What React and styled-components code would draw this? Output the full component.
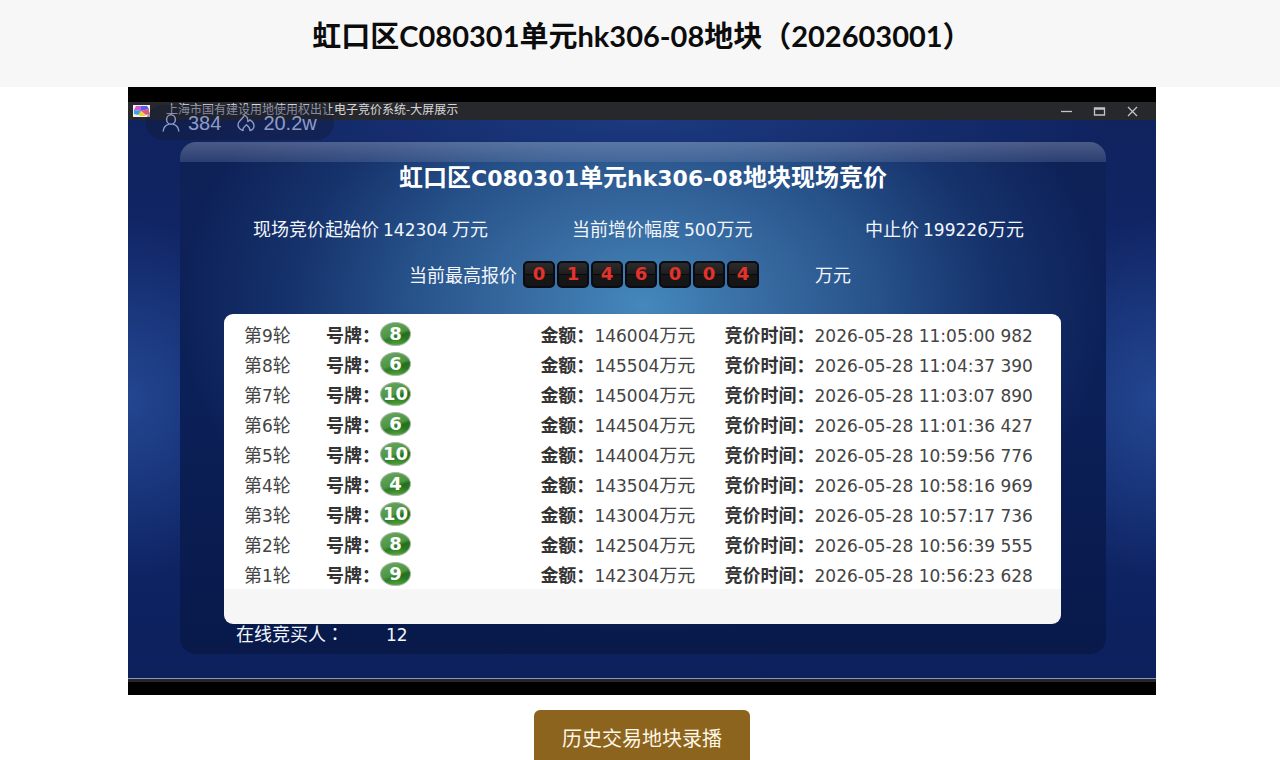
import React from "react";
import styled, { createGlobalStyle } from "styled-components";

const GlobalStyle = createGlobalStyle`
  * { box-sizing: border-box; }
  body { margin: 0; background: #ffffff; font-family: "Noto Sans CJK SC", sans-serif; }
`;

const Header = styled.header`
  height: 87px;
  padding: 16px 0 0 4px;
  background: #f7f7f7;
`;

const PageTitle = styled.h1`
  margin: 0;
  text-align: center;
  font: 700 29px/40px Lato, "Noto Sans CJK SC", sans-serif;
  color: #0c0c0c;
`;

const Main = styled.main`
  padding: 0 124px 0 128px;
`;

const Stage = styled.section`
  position: relative;
  padding: 15px 0 13px;
  background: #000000;
`;

const TitleBar = styled.div`
  display: flex;
  align-items: center;
  height: 18px;
  padding: 0 7px 0 5px;
  background: #27282c;
  color: #d8d8da;
`;

const WindowTitle = styled.span`
  flex: 1;
  align-self: flex-start;
  margin-left: 16px;
  font-size: 12px;
  line-height: 14px;
`;

const WindowButton = styled.button`
  display: flex;
  align-items: center;
  justify-content: center;
  width: 33px;
  height: 18px;
  padding: 0;
  border: 0;
  background: none;
  color: #c4c4c6;
`;

const Viewers = styled.div`
  position: absolute;
  top: 18px;
  left: 18px;
  display: flex;
  align-items: center;
  height: 35px;
  padding: 0 17px 0 16px;
  border-radius: 18px;
  background: rgba(20, 26, 54, 0.4);
  color: #8d9cc6;
  font: 20px/24px "Liberation Sans", sans-serif;
`;

const Stat = styled.span`
  display: flex;
  align-items: center;
  gap: 8px;
  margin-right: 16px;
  &:last-child { margin-right: 0; }
`;

const Screen = styled.div`
  padding: 22px 50px 24px 52px;
  border-bottom: 1px solid #8c93b4;
  background:
    radial-gradient(ellipse 150px 180px at 0 50%, #234690, transparent),
    radial-gradient(ellipse 150px 180px at 100% 50%, #234690, transparent),
    radial-gradient(ellipse 45% 90px at 50% 0, #1c3a80, transparent),
    linear-gradient(#10235f, #11286c 50%, #0c205c);
`;

const ScreenEdge = styled.div`
  height: 3px;
  background: #25262d;
`;

const Board = styled.div`
  overflow: hidden;
  border-radius: 16px;
  color: #f2f6fc;
  background:
    linear-gradient(rgba(160, 170, 200, 0.42), rgba(130, 145, 185, 0.26)) top / 100% 20px no-repeat,
    radial-gradient(ellipse 50% 64% at 50% 32%, #4488bc 0%, #36699f 28%, rgba(42, 88, 144, 0.9) 50%, rgba(30, 66, 126, 0.55) 75%, transparent 100%),
    linear-gradient(#0e2258, #0c2058 50%, #08194a);
`;

const BoardTitle = styled.h2`
  margin: 18px 0 0;
  text-align: center;
  font-size: 24px;
  line-height: 32px;
  font-weight: 700;
  color: #ffffff;
`;

const Num = styled.span`
  font-family: "DejaVu Sans", sans-serif;
  font-size: ${(p) => (p.$large ? 22 : 17)}px;
  line-height: 1;
`;

const Figures = styled.div`
  display: grid;
  grid-template-columns: 319fr 293fr 241fr;
  margin-top: 22px;
  padding-left: 73px;
  font-size: 18px;
  line-height: 28px;
`;

const Highest = styled.div`
  display: flex;
  align-items: center;
  justify-content: center;
  height: 28px;
  margin-top: 18px;
  padding-right: 26px;
  font-size: 18px;
  line-height: 28px;
`;

const Digits = styled.div`
  display: flex;
  gap: 2px;
  margin: 0 56px 0 6px;
`;

const Digit = styled.span`
  width: 32px;
  height: 27px;
  border: 2px solid #080b14;
  border-radius: 5px;
  background: linear-gradient(#2c2c2c, #1d1d1d 48%, #0a0a0a 50%, #171717 54%, #151515);
  color: #e5322c;
  font: 700 18px/22px "DejaVu Sans", sans-serif;
  text-align: center;
`;

const Card = styled.div`
  margin: 26px 45px 0 44px;
  padding: 5px 0 35px;
  border-radius: 9px;
  background: linear-gradient(#ffffff, #ffffff) top / 100% 275px no-repeat, #f6f6f6;
`;

const Rounds = styled.table`
  width: 100%;
  table-layout: fixed;
  border-collapse: collapse;
  color: #444444;
  font-size: 18px;
`;

const Cell = styled.td`
  width: ${(p) => p.$w};
  height: 30px;
  padding: 0 0 0 ${(p) => p.$left || 0}px;
  line-height: 28px;
  white-space: nowrap;
`;

const Line = styled.div`
  display: flex;
  align-items: center;
`;

const Label = styled.span`
  font-weight: 700;
  color: #333333;
`;

const Badge = styled.span`
  display: flex;
  align-items: center;
  justify-content: center;
  width: 31px;
  height: 24px;
  border: 1px solid #a9b8a6;
  border-radius: 50%;
  background:
    radial-gradient(ellipse 60% 40% at 50% 100%, rgba(110, 190, 70, 0.6), transparent),
    linear-gradient(160deg, #6aa860 0%, #4c9642 50%, #236f20 60%, #2f8a2b 100%);
  color: #ffffff;
  font: 700 18px/20px "DejaVu Sans", sans-serif;
`;

const Online = styled.div`
  display: flex;
  align-items: baseline;
  gap: 42px;
  padding: 0 0 10px 56px;
  font-family: "Noto Sans CJK TC", sans-serif;
  font-size: 18px;
  line-height: 18px;
`;

const Actions = styled.div`
  display: flex;
  justify-content: center;
  padding-top: 15px;
`;

const ReplayButton = styled.button`
  height: 56px;
  padding: 0 28px;
  border: 0;
  border-radius: 6px;
  background: #8c641d;
  color: #fdf6e6;
  font: 400 20px/30px "Noto Sans CJK SC", sans-serif;
`;

const rounds = [
  [9, 8, "146004", "2026-05-28 11:05:00 982"],
  [8, 6, "145504", "2026-05-28 11:04:37 390"],
  [7, 10, "145004", "2026-05-28 11:03:07 890"],
  [6, 6, "144504", "2026-05-28 11:01:36 427"],
  [5, 10, "144004", "2026-05-28 10:59:56 776"],
  [4, 4, "143504", "2026-05-28 10:58:16 969"],
  [3, 10, "143004", "2026-05-28 10:57:17 736"],
  [2, 8, "142504", "2026-05-28 10:56:39 555"],
  [1, 9, "142304", "2026-05-28 10:56:23 628"],
];

function AppLogo() {
  return (
    <svg width="17" height="12" viewBox="0 0 17 12" aria-hidden="true">
      <rect width="17" height="12" fill="#f4f0f4" />
      <path d="M8 6 1 5l2-4 5 0z" fill="#d65ad8" />
      <path d="M8 6 8 1l6 0 2 3z" fill="#5b5be8" />
      <path d="m8 6 8-2 0 5-3 1z" fill="#e0567c" />
      <path d="m8 6 5 5-6 0-2-2z" fill="#f0d032" />
      <path d="m8 6-3 4-4-1 0-4z" fill="#38a6e0" />
    </svg>
  );
}

function PersonIcon() {
  return (
    <svg width="18" height="18" viewBox="0 0 18 18" fill="none" stroke="currentColor" strokeWidth="1.4" strokeLinecap="round" aria-hidden="true">
      <ellipse cx="9" cy="5.5" rx="4.4" ry="4.7" />
      <path d="M1.200 17c.3-3.600 2.300-5.800 5.400-6.700M16.800 17c-.3-3.600-2.300-5.800-5.400-6.700" />
    </svg>
  );
}

function FlameIcon() {
  return (
    <svg width="18" height="18" viewBox="0 0 18 18" fill="none" stroke="currentColor" strokeWidth="1.4" strokeLinejoin="round" strokeLinecap="round" aria-hidden="true">
      <path d="M6 16.500C3 15.500 1 13.300 1 10.500 1 7 5.500 5.500 7.500 1c2.500 1.500 3.700 3.500 3.300 6.500 1-.2 1.700-.7 2.200-1.700 2.500 1.700 4 3.700 4 6 0 2.400-1.700 4.200-4 4.800.2-2.800-1.500-4.100-3.500-5.800C7.500 12.400 5.600 14.200 6 16.500z" />
    </svg>
  );
}

const windowIcons = [
  ["最小化", <path key="p" d="M1 6.500h11" />],
  ["最大化", <path key="p" d="M1.500 3h10v7h-10zM1.500 4h10" />],
  ["关闭", <path key="p" d="m2 2 9 9M11 2l-9 9" />],
];

export default function App() {
  return (
    <>
      <GlobalStyle />
      <Header>
        <PageTitle>虹口区C080301单元hk306-08地块（202603001）</PageTitle>
      </Header>
      <Main>
        <Stage>
          <TitleBar>
            <AppLogo />
            <WindowTitle>上海市国有建设用地使用权出让电子竞价系统-大屏展示</WindowTitle>
            {windowIcons.map(([name, shape]) => (
              <WindowButton key={name} type="button" aria-label={name}>
                <svg width="13" height="13" viewBox="0 0 13 13" fill="none" stroke="currentColor" strokeWidth="1.3">{shape}</svg>
              </WindowButton>
            ))}
          </TitleBar>
          <Screen>
            <Board>
              <BoardTitle>
                虹口区<Num $large>C080301</Num>单元<Num $large>hk306-08</Num>地块现场竞价
              </BoardTitle>
              <Figures>
                <div>现场竞价起始价 <Num>142304</Num> 万元</div>
                <div>当前增价幅度 <Num>500</Num>万元</div>
                <div>中止价 <Num>199226</Num>万元</div>
              </Figures>
              <Highest>
                <span>当前最高报价</span>
                <Digits>
                  {"0146004".split("").map((d, i) => <Digit key={i}>{d}</Digit>)}
                </Digits>
                <span>万元</span>
              </Highest>
              <Card>
                <Rounds>
                  <tbody>
                    {rounds.map(([round, plate, amount, time]) => (
                      <tr key={round}>
                        <Cell $w="12.2%" $left={20}>第<Num>{round}</Num>轮</Cell>
                        <Cell $w="25.6%"><Line><Label>号牌：</Label><Badge>{plate}</Badge></Line></Cell>
                        <Cell $w="22%"><Label>金额：</Label><Num>{amount}</Num>万元</Cell>
                        <Cell><Label>竞价时间：</Label><Num>{time}</Num></Cell>
                      </tr>
                    ))}
                  </tbody>
                </Rounds>
              </Card>
              <Online><span>在线竞买人：</span><Num>12</Num></Online>
            </Board>
          </Screen>
          <ScreenEdge />
          <Viewers>
            <Stat><PersonIcon />384</Stat>
            <Stat><FlameIcon />20.2w</Stat>
          </Viewers>
        </Stage>
        <Actions>
          <ReplayButton type="button">历史交易地块录播</ReplayButton>
        </Actions>
      </Main>
    </>
  );
}
